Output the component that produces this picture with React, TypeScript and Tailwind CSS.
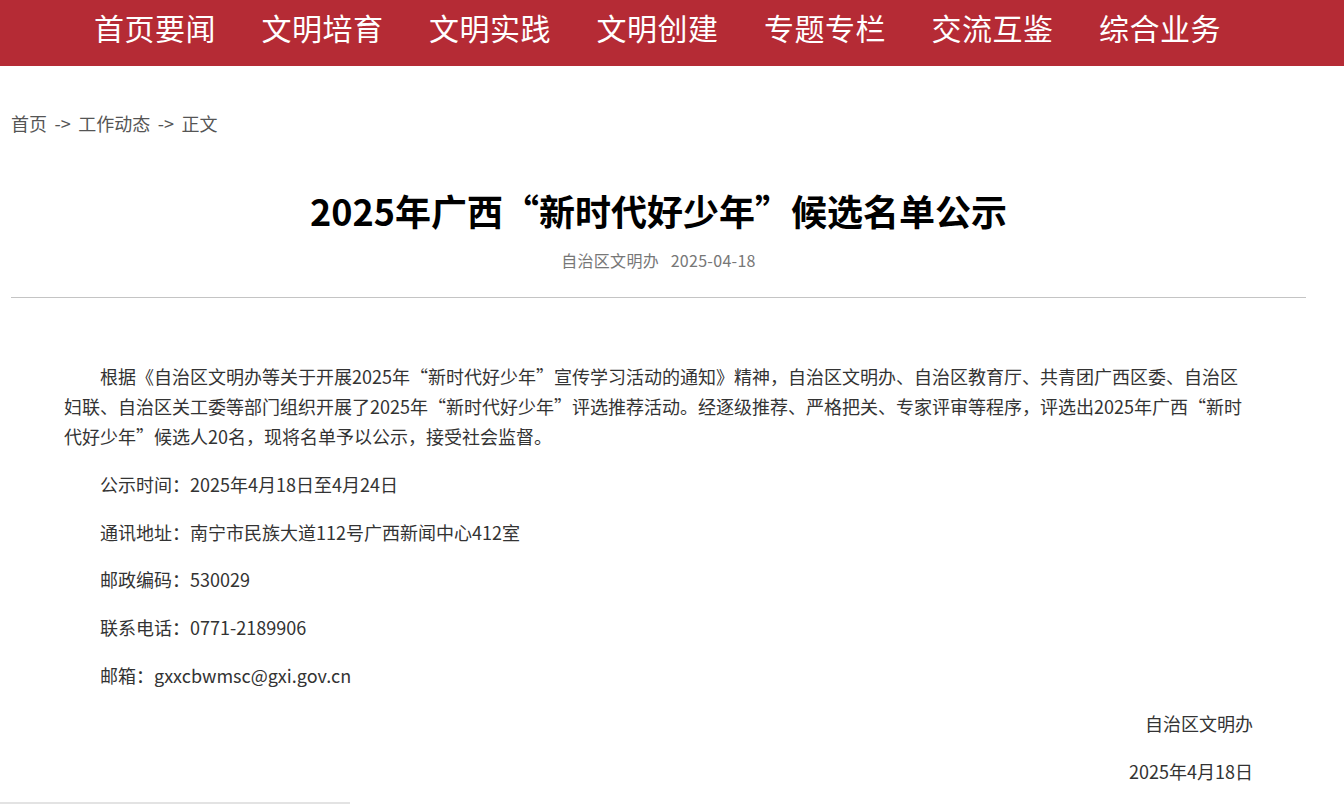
const NAV = ['首页要闻', '文明培育', '文明实践', '文明创建', '专题专栏', '交流互鉴', '综合业务']

const FONT = "font-['Noto_Sans_CJK_SC','Noto_Sans',sans-serif]"

export default function App() {
  return (
    <div lang="zh-CN" className={`min-h-screen bg-white ${FONT}`}>
      {/* ── Top nav ───────────────────────────────────────── */}
      <nav className="h-[66px] bg-[#b52b35] flex items-start pt-[12px] pl-[94px] gap-[45.5px]">
        {NAV.map((item) => (
          <a key={item} href="#" className="text-[30px] leading-[30px] text-white tracking-[0.5px]">
            {item}
          </a>
        ))}
      </nav>

      <div className="w-[1295px] ml-[11px]">
        {/* Breadcrumb */}
        <div className="mt-[44px] text-[18px] leading-[26px] text-[#555] [word-spacing:3.5px]">
          首页 -&gt; 工作动态 -&gt; 正文
        </div>

        {/* Title */}
        <h1 className="mt-[50px] text-center text-[36px] leading-[48px] font-bold text-black">
          2025年广西“新时代好少年”候选名单公示
        </h1>
        <div className="mt-[14px] text-center text-[16px] leading-[24px] text-[#777] tracking-[0.3px]">
          自治区文明办&nbsp;&nbsp;&nbsp;2025-04-18
        </div>
        <div className="mt-[25px] h-px bg-[#c4c4c4]" />

        {/* Body */}
        <div className="mt-[63px] px-[53px] text-[18px] leading-[30px] text-[#333]">
          <p className="indent-[2em] mb-[17.8px]">
            根据《自治区文明办等关于开展2025年“新时代好少年”宣传学习活动的通知》精神，自治区文明办、自治区教育厅、共青团广西区委、自治区妇联、自治区关工委等部门组织开展了2025年“新时代好少年”评选推荐活动。经逐级推荐、严格把关、专家评审等程序，评选出2025年广西“新时代好少年”候选人20名，现将名单予以公示，接受社会监督。
          </p>
          <p className="indent-[2em] mb-[17.8px]">公示时间：2025年4月18日至4月24日</p>
          <p className="indent-[2em] mb-[17.8px]">通讯地址：南宁市民族大道112号广西新闻中心412室</p>
          <p className="indent-[2em] mb-[17.8px]">邮政编码：530029</p>
          <p className="indent-[2em] mb-[17.8px]">联系电话：0771-2189906</p>
          <p className="indent-[2em] mb-[17.8px]">邮箱：gxxcbwmsc@gxi.gov.cn</p>
          <p className="text-right mb-[17.8px]">自治区文明办</p>
          <p className="text-right">2025年4月18日</p>
        </div>
      </div>

      <div className="mt-[16px] h-[2px] w-[350px] bg-[#e3e3e3]" />
    </div>
  )
}
